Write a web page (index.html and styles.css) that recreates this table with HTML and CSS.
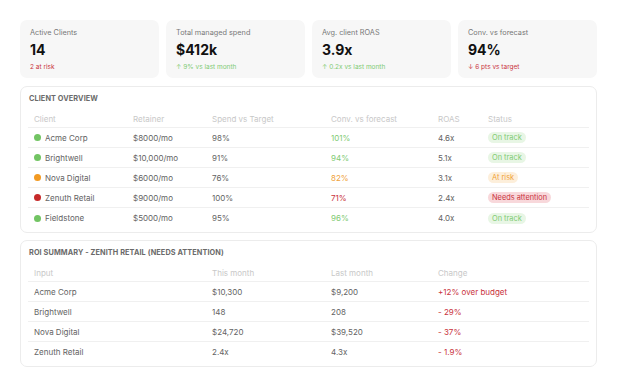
FILE: index.html
```html
<!DOCTYPE html>
<html>
<head>
<meta charset="utf-8">
<link rel="stylesheet" href="styles.css">
</head>
<body>
<div class="page">
  <div class="cards">
    <div class="card">
      <div class="card-label">Active Clients</div>
      <div class="card-value">14</div>
      <div class="card-sub red">2 at risk</div>
    </div>
    <div class="card">
      <div class="card-label">Total managed spend</div>
      <div class="card-value">$412k</div>
      <div class="card-sub green">↑ 9% vs last month</div>
    </div>
    <div class="card">
      <div class="card-label">Avg. client ROAS</div>
      <div class="card-value">3.9x</div>
      <div class="card-sub green">↑ 0.2x vs last month</div>
    </div>
    <div class="card">
      <div class="card-label">Conv. vs forecast</div>
      <div class="card-value">94%</div>
      <div class="card-sub red">↓ 6 pts vs target</div>
    </div>
  </div>

  <div class="panel">
    <div class="panel-title">Client Overview</div>
    <div class="grid overview head">
      <div>Client</div><div>Retainer</div><div>Spend vs Target</div><div>Conv. vs forecast</div><div>ROAS</div><div>Status</div>
    </div>
    <div class="grid overview row">
      <div class="client"><span class="dot dot-green"></span>Acme Corp</div><div>$8000/mo</div><div>98%</div><div class="green">101%</div><div>4.6x</div><div><span class="badge badge-green">On track</span></div>
    </div>
    <div class="grid overview row">
      <div class="client"><span class="dot dot-green"></span>Brightwell</div><div>$10,000/mo</div><div>91%</div><div class="green">94%</div><div>5.1x</div><div><span class="badge badge-green">On track</span></div>
    </div>
    <div class="grid overview row">
      <div class="client"><span class="dot dot-orange"></span>Nova Digital</div><div>$6000/mo</div><div>76%</div><div class="orange">82%</div><div>3.1x</div><div><span class="badge badge-orange">At risk</span></div>
    </div>
    <div class="grid overview row">
      <div class="client"><span class="dot dot-red"></span>Zenuth Retail</div><div>$9000/mo</div><div>100%</div><div class="red">71%</div><div>2.4x</div><div><span class="badge badge-red">Needs attention</span></div>
    </div>
    <div class="grid overview row">
      <div class="client"><span class="dot dot-green"></span>Fieldstone</div><div>$5000/mo</div><div>95%</div><div class="green">96%</div><div>4.0x</div><div><span class="badge badge-green">On track</span></div>
    </div>
  </div>

  <div class="panel">
    <div class="panel-title">ROI Summary - Zenith Retail (Needs Attention)</div>
    <div class="grid roi head">
      <div>Input</div><div>This month</div><div>Last month</div><div>Change</div>
    </div>
    <div class="grid roi row">
      <div>Acme Corp</div><div>$10,300</div><div>$9,200</div><div class="red">+12% over budget</div>
    </div>
    <div class="grid roi row">
      <div>Brightwell</div><div>148</div><div>208</div><div class="red">- 29%</div>
    </div>
    <div class="grid roi row">
      <div>Nova Digital</div><div>$24,720</div><div>$39,520</div><div class="red">- 37%</div>
    </div>
    <div class="grid roi row">
      <div>Zenuth Retail</div><div>2.4x</div><div>4.3x</div><div class="red">- 1.9%</div>
    </div>
  </div>
</div>
</body>
</html>
```

FILE: styles.css
```css
* { box-sizing: border-box; }
html, body { margin: 0; padding: 0; background: #ffffff; }
body {
  font-family: Inter, "Noto Sans", "Liberation Sans", sans-serif;
  color: #555;
  font-size: 8px;
}
.page {
  padding: 20px 21px 0 20px;
  width: 618px;
}
.cards {
  display: grid;
  grid-template-columns: repeat(4, 1fr);
  gap: 7px;
}
.card {
  background: #f7f7f7;
  border-radius: 7px;
  padding: 8px 10px 6px 10px;
  height: 58px;
}
.card-label {
  font-size: 7.3px;
  line-height: 10px;
  color: #777;
}
.card-value {
  margin-top: 3px;
  font-size: 14px;
  line-height: 17px;
  font-weight: 700;
  color: #111;
}
.card-sub {
  margin-top: 5px;
  font-size: 6.5px;
  line-height: 9px;
}
.red { color: #c9323c; }
.green { color: #7fcb74; }
.orange { color: #f0a23a; }

.panel {
  margin-top: 8px;
  border: 1px solid #ececec;
  border-radius: 7px;
  padding: 7px 7px 4px 7px;
  background: #fff;
}
.panel + .panel { margin-top: 7px; }
.panel-title {
  font-size: 7.3px;
  line-height: 10px;
  font-weight: 700;
  text-transform: uppercase;
  color: #6a6a6a;
  letter-spacing: 0.1px;
  padding-left: 1px;
  margin-bottom: 8px;
}
.grid {
  display: grid;
  align-items: center;
}
.overview { grid-template-columns: 99px 79px 119px 107px 50px 1fr; }
.roi { grid-template-columns: 178px 119px 107px 1fr; }
.grid > div { padding-left: 6px; white-space: nowrap; }
.head {
  height: 16px;
  color: #c8c8c8;
  border-bottom: 1px solid #f0f0f0;
  padding-bottom: 1px;
}
.row {
  height: 20px;
  border-bottom: 1px solid #f0f0f0;
  color: #636363;
}
.row:last-child { border-bottom: none; }
.client { display: flex; align-items: center; gap: 4px; }
.dot {
  width: 7px;
  height: 7px;
  border-radius: 50%;
  display: inline-block;
}
.dot-green { background: #72c463; }
.dot-orange { background: #f29a22; }
.dot-red { background: #c62a2a; }
.badge {
  display: inline-block;
  font-size: 7.4px;
  line-height: 11px;
  padding: 0 4px;
  border-radius: 5.5px;
}
.badge-green { background: #e8f6e5; color: #7fcb74; }
.badge-orange { background: #fdefdb; color: #f0a23a; }
.badge-red { background: #f8d8db; color: #c9323c; }
```
